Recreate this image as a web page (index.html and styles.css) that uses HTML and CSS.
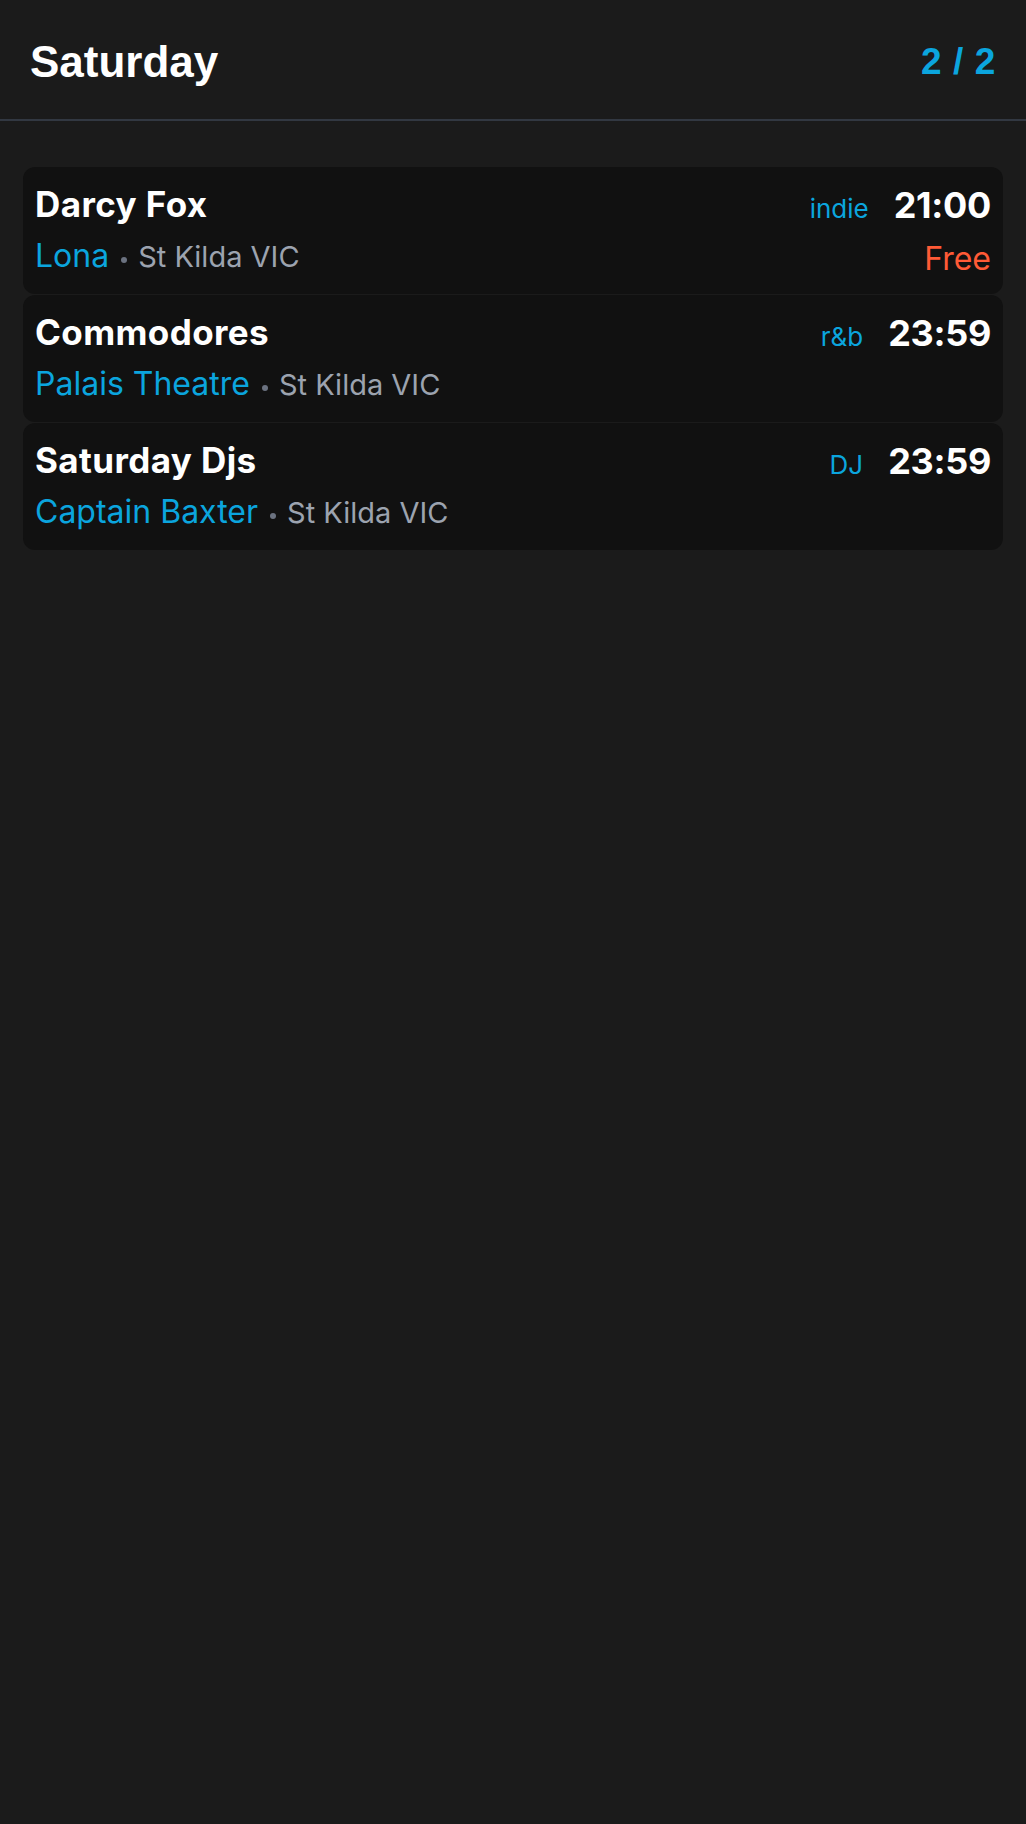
FILE: index.html
```html
<!DOCTYPE html>
<html lang="en">
<head>
<meta charset="utf-8">
<title>Saturday</title>
<link rel="stylesheet" href="styles.css">
</head>
<body>
<header class="topbar">
  <h1 class="day">Saturday</h1>
  <div class="pager">2 / 2</div>
</header>
<main class="list">
  <article class="gig">
    <div class="gig-title">Darcy Fox</div>
    <div class="gig-meta"><span class="tag">indie</span><span class="time">21:00</span></div>
    <div class="gig-venue"><span class="venue">Lona</span><span class="dot"></span><span class="place">St Kilda VIC</span></div>
    <div class="price">Free</div>
  </article>
  <article class="gig">
    <div class="gig-title">Commodores</div>
    <div class="gig-meta"><span class="tag">r&amp;b</span><span class="time">23:59</span></div>
    <div class="gig-venue"><span class="venue">Palais Theatre</span><span class="dot"></span><span class="place">St Kilda VIC</span></div>
    <div class="price"></div>
  </article>
  <article class="gig">
    <div class="gig-title">Saturday Djs</div>
    <div class="gig-meta"><span class="tag">DJ</span><span class="time">23:59</span></div>
    <div class="gig-venue"><span class="venue">Captain Baxter</span><span class="dot"></span><span class="place">St Kilda VIC</span></div>
    <div class="price"></div>
  </article>
</main>
</body>
</html>
```

FILE: styles.css
```css
* { box-sizing: border-box; }

html, body {
  margin: 0;
  padding: 0;
  background: #1b1b1b;
}

body {
  font-family: Inter, "Noto Sans", sans-serif;
  color: #ffffff;
  min-height: 1824px;
}

.topbar {
  height: 121px;
  display: flex;
  align-items: center;
  justify-content: space-between;
  padding: 5px 30px 0 30px;
  border-bottom: 2px solid #323842;
  background: #1b1b1b;
}

.day {
  margin: 0;
  font-family: "Liberation Sans", Arial, sans-serif;
  font-weight: 700;
  font-size: 44px;
  line-height: 50px;
  color: #ffffff;
}

.pager {
  font-family: "Liberation Sans", Arial, sans-serif;
  font-weight: 700;
  font-size: 37px;
  line-height: 50px;
  letter-spacing: 0.6px;
  color: #0ba5de;
}

.list {
  padding: 46px 23px 0 23px;
  display: flex;
  flex-direction: column;
  gap: 1px;
}

.gig {
  background: #111111;
  border-radius: 12px;
  padding: 17px 12px 16px 12px;
  display: grid;
  grid-template-columns: 1fr auto;
  grid-template-rows: 44px 44px;
  row-gap: 6px;
  align-items: start;
}

.gig-title {
  font-weight: 700;
  font-size: 35px;
  line-height: 40px;
  letter-spacing: 0.4px;
  color: #ffffff;
}

.gig-meta {
  display: flex;
  align-items: baseline;
  justify-content: flex-end;
  gap: 25px;
  line-height: 42px;
}

.tag {
  font-size: 26px;
  color: #0ba5de;
}

.time {
  font-weight: 700;
  font-size: 36px;
  letter-spacing: -0.3px;
  color: #ffffff;
}

.gig-venue {
  font-size: 32px;
  line-height: 44px;
  height: 44px;
  display: flex;
  align-items: baseline;
}

.venue {
  color: #0ba5de;
}

.dot {
  flex: none;
  align-self: flex-end;
  width: 6px;
  height: 6px;
  border-radius: 50%;
  background: #6b7280;
  margin: 0 11px 15px 12px;
}

.place {
  font-size: 29px;
  color: #9ca3af;
}

.price {
  font-size: 32px;
  line-height: 50px;
  color: #ff5a36;
  text-align: right;
}
```
